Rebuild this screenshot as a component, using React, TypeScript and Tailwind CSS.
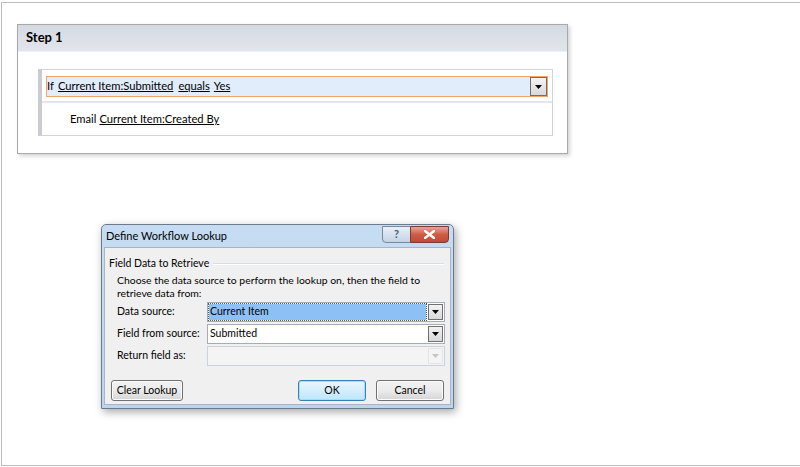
import React from "react";

const font = { fontFamily: 'Lato, "Noto Sans", "Open Sans", sans-serif' };

function Arrow({ color = "#000" }: { color?: string }) {
  return (
    <svg width="7" height="4" viewBox="0 0 7 4">
      <path d="M0 0 H7 L3.5 4 Z" fill={color} />
    </svg>
  );
}

function Select({
  value,
  selected,
  disabled,
}: {
  value?: string;
  selected?: boolean;
  disabled?: boolean;
}) {
  return (
    <div
      className={`flex h-[20px] w-[238px] items-stretch border ${
        disabled ? "border-[#c9d3dd] bg-[#f4f4f4]" : "border-[#a5acb5] bg-white"
      }`}
    >
      <div className="flex flex-1 items-center p-[1px]">
        {value && (
          <div
            className={`flex h-full flex-1 items-center whitespace-nowrap pl-[1px] text-[10.5px] text-black ${
              selected ? "bg-[#8dc0f4] outline outline-1 outline-dotted outline-[#555]" : ""
            }`}
          >
            {value}
          </div>
        )}
      </div>
      <div
        className={`m-[1px] flex w-[15px] items-center justify-center border ${
          disabled
            ? "border-[#e5e5e5] bg-[#f4f4f4]"
            : "border-[#707070] bg-gradient-to-b from-[#f2f2f2] to-[#d8d8d8]"
        }`}
      >
        <Arrow color={disabled ? "#c4c4c4" : "#000"} />
      </div>
    </div>
  );
}

function Btn({ label, def }: { label: string; def?: boolean }) {
  return (
    <div
      className={`flex h-[21px] w-[68px] items-center justify-center whitespace-nowrap rounded-[3px] border text-[10.5px] text-black ${
        def
          ? "border-[#3c7fb1] bg-gradient-to-b from-[#eaf6fd] to-[#bee6fd] shadow-[inset_0_0_0_1px_#9fe0ff]"
          : "border-[#707070] bg-gradient-to-b from-[#f2f2f2] via-[#ebebeb] to-[#d5d5d5] shadow-[inset_0_0_0_1px_#fcfcfc]"
      }`}
    >
      {label}
    </div>
  );
}

export default function App() {
  return (
    <div className="relative h-[467px] w-[800px] overflow-hidden bg-white" style={font}>
      <div className="ml-[1px] mt-[2px] h-[464px] border-b border-l border-t border-[#bcbcbc] pl-[15px] pt-[21px]">
        {/* Step panel */}
        <div className="w-[551px] border border-[#a9a9a9] bg-white shadow-[2px_2px_4px_rgba(0,0,0,0.18)]">
          <div className="flex h-[27px] items-center border-b border-[#eef0f4] bg-gradient-to-b from-[#d5d9e2] to-[#e2e5ec] pl-[8px] text-[13px] font-bold text-black">
            Step 1
          </div>
          <div className="pb-[17px] pl-[20px] pt-[17px]">
            <div className="w-[515px] border border-[#d4d4d8] border-l-[4px] border-l-[#c9cbd0]">
              <div className="px-[4px] pb-[4px] pt-[6px]">
                <div className="flex h-[21px] items-center justify-between border border-[#f0a46b] bg-[#e1edfb] pl-[0px]">
                  <div className="flex items-center gap-[5px] whitespace-nowrap text-[11.2px] text-black">
                    <span>If</span>
                    <span className="-ml-[1px] underline">Current Item:Submitted</span>
                    <span className="underline">equals</span>
                    <span className="-ml-[1px] underline">Yes</span>
                  </div>
                  <div className="flex h-[19px] w-[17px] items-center justify-center border border-[#6e6e6e] bg-gradient-to-b from-[#f4f4f4] to-[#d9d9d9]">
                    <Arrow />
                  </div>
                </div>
              </div>
              <div className="flex h-[34px] items-center whitespace-nowrap border-t-[2px] border-[#e6e6ea] pl-[28px] text-[11.2px] text-black">
                Email <span className="ml-[3px] underline">Current Item:Created By</span>
              </div>
            </div>
          </div>
        </div>
      </div>

      {/* Dialog window */}
      <div className="absolute left-[101px] top-[224px] h-[185px] w-[353px] rounded-t-[5px] border border-[#6b7a8c] bg-gradient-to-b from-[#c6dcf2] to-[#bcd4ec] shadow-[2px_3px_8px_rgba(0,0,0,0.35)]">
        <div className="relative flex h-[22px] items-center whitespace-nowrap pl-[4px] text-[11px] text-black">
          Define Workflow Lookup
          <div className="absolute right-[4px] top-[1px] flex">
            <div className="flex h-[17px] w-[29px] items-center justify-center rounded-bl-[4px] border border-[#7a8899] bg-gradient-to-b from-[#e8f0f9] to-[#c3d3e5] text-[11px] font-bold text-[#4b5a6b]">
              ?
            </div>
            <div className="-ml-[1px] flex h-[17px] w-[39px] items-center justify-center rounded-br-[4px] border border-[#7c3a34] bg-gradient-to-b from-[#e6a497] via-[#cf5b45] to-[#c14a35]">
              <svg width="11" height="9" viewBox="0 0 11 9">
                <path d="M1 1 L10 8 M10 1 L1 8" stroke="#fff" strokeWidth="2.4" strokeLinecap="square" />
              </svg>
            </div>
          </div>
        </div>
        <div className="mx-[2px] h-[158px] border border-[#a6b6c8] bg-[#f0f0f0] pl-[6px] pr-[5px] pt-[9px]">
          <div className="-ml-[2px] flex h-[14px] items-center whitespace-nowrap text-[10.5px] text-black">
            <span className="pr-[4px]">Field Data to Retrieve</span>
            <div className="mr-[1px] h-[2px] flex-1 border-b border-t border-b-white border-t-[#d5dfe5]"></div>
          </div>
          <div className="pl-[6px]">
            <div className="mt-[3px] whitespace-nowrap text-[10.4px] leading-[13px] text-black">
              Choose the data source to perform the lookup on, then the field to
              <br />
              retrieve data from:
            </div>
            <div className="mt-[2px] flex flex-col gap-[2px]">
              <div className="flex items-center whitespace-nowrap text-[10.5px] text-black">
                <span className="w-[90px]">Data source:</span>
                <Select value="Current Item" selected />
              </div>
              <div className="flex items-center whitespace-nowrap text-[10.5px] text-black">
                <span className="w-[90px]">Field from source:</span>
                <Select value="Submitted" />
              </div>
              <div className="flex items-center whitespace-nowrap text-[10.5px] text-black">
                <span className="w-[90px]">Return field as:</span>
                <Select disabled />
              </div>
            </div>
          </div>
          <div className="mt-[14px] flex items-center pr-[1px]">
            <div className="flex h-[21px] w-[72px] items-center justify-center whitespace-nowrap rounded-[3px] border border-[#707070] bg-gradient-to-b from-[#f2f2f2] via-[#ebebeb] to-[#d5d5d5] text-[10.5px] text-black shadow-[inset_0_0_0_1px_#fcfcfc]">
              Clear Lookup
            </div>
            <div className="ml-auto flex gap-[10px]">
              <Btn label="OK" def />
              <Btn label="Cancel" />
            </div>
          </div>
        </div>
      </div>
    </div>
  );
}
